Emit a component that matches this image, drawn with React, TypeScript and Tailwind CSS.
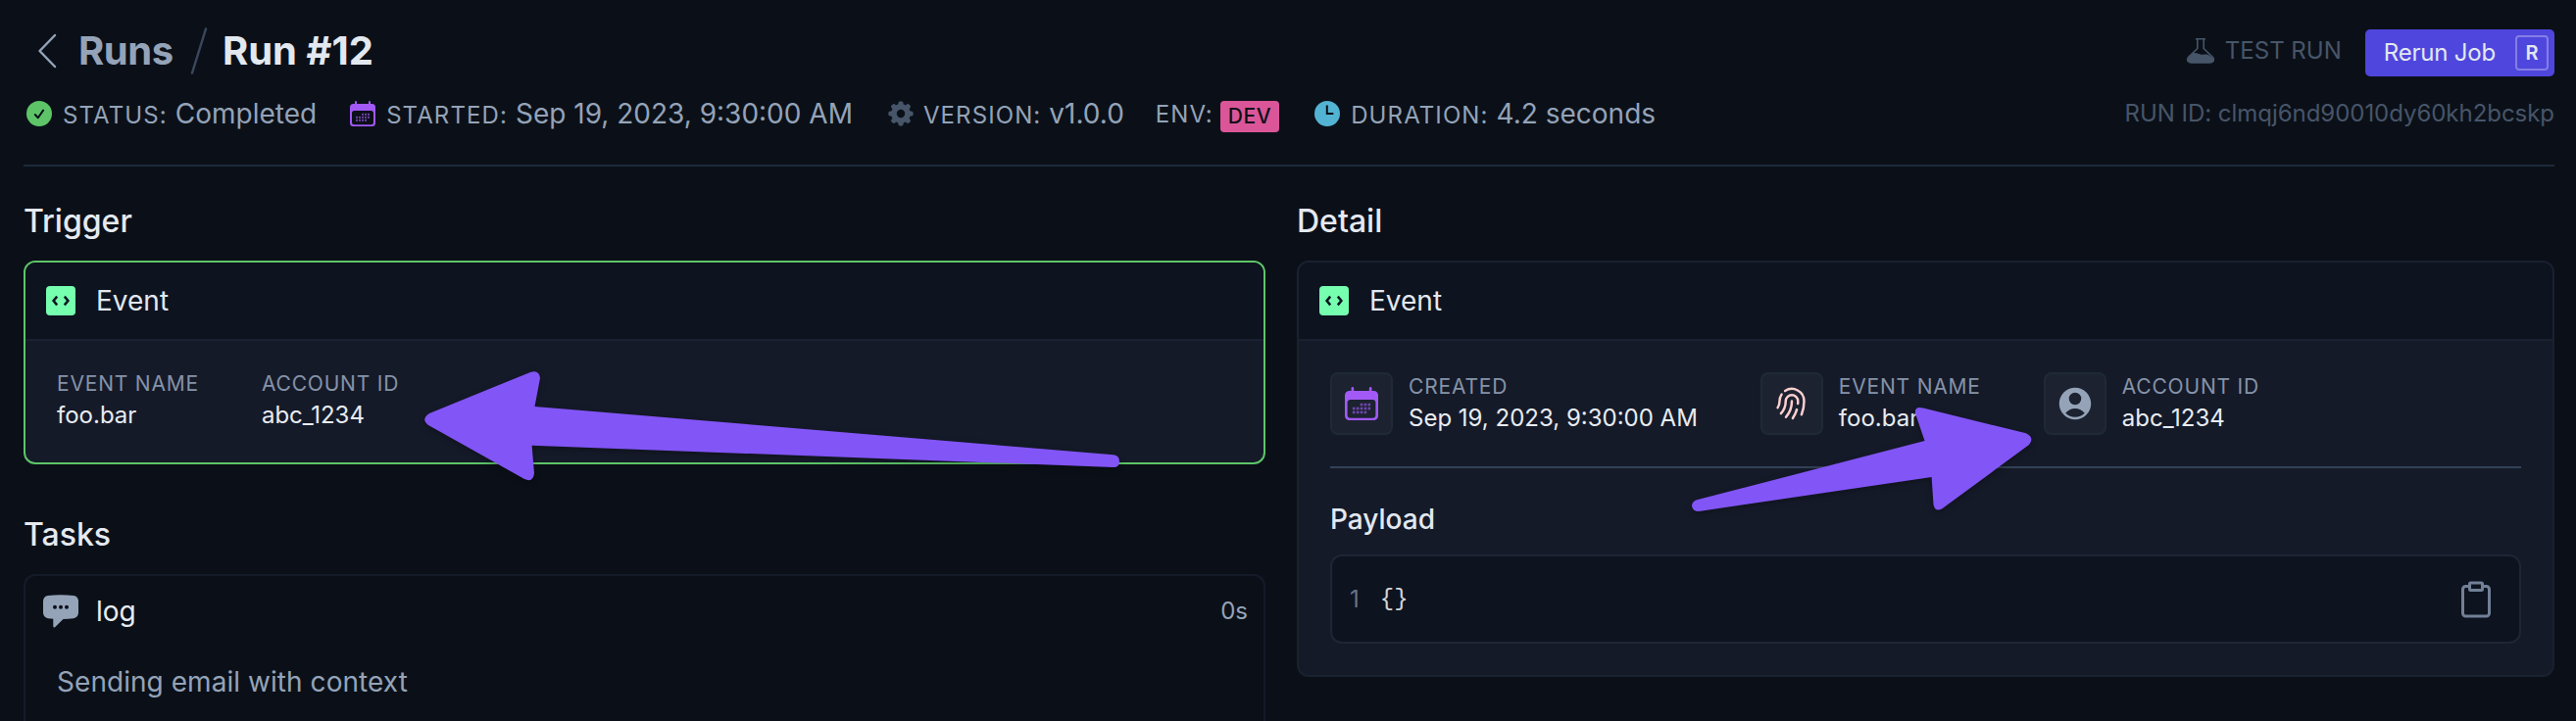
import type { ReactNode } from "react";
import { HiMiniCog8Tooth, HiOutlineFingerPrint, HiUserCircle } from "react-icons/hi2";

function CalendarIcon({ className }: { className: string }) {
  const dots = [
    [12, 12], [15, 12], [18, 12],
    [6, 15], [9, 15], [12, 15], [15, 15], [18, 15],
    [6, 18], [9, 18], [12, 18], [15, 18],
  ];
  return (
    <svg viewBox="0 0 26 26" className={className} fill="#a259f5">
      <path d="M5 1a1 1 0 0 1 2 0v2h12V1a1 1 0 0 1 2 0v2h1.500a3.500 3.500 0 0 1 3.500 3.500v16a3.500 3.500 0 0 1-3.500 3.500h-19A3.500 3.500 0 0 1 0 22.500v-16A3.500 3.500 0 0 1 3.500 3H5zM4.500 10A2.500 2.500 0 0 0 2 12.500v9.300A2.500 2.500 0 0 0 4.500 24.300h17a2.500 2.500 0 0 0 2.500-2.500v-9.300a2.500 2.500 0 0 0-2.500-2.500z" fillRule="evenodd" />
      {dots.map(([x, y]) => (
        <rect key={`${x}-${y}`} x={x} y={y + 0.8} width="2" height="2" opacity="0.65" />
      ))}
    </svg>
  );
}

function CodeIcon() {
  return (
    <svg viewBox="0 0 30 30" className="size-[30px] shrink-0" fill="none">
      <rect width="30" height="30" rx="4" fill="#76ffaf" />
      <path d="M11.200 10.600 7.600 15l3.600 4.400M18.800 10.600l3.600 4.400-3.600 4.400" stroke="#0d131f" strokeWidth="2.500" />
    </svg>
  );
}

function Meta({ label, children }: { label: string; children: ReactNode }) {
  return (
    <span className="flex items-baseline whitespace-nowrap pt-[2px] text-[28px] leading-[28px] text-[#94a3b8]">
      <span className="mr-2 text-2xl leading-[28px] tracking-[1.1px]">{label}</span>
      {children}
    </span>
  );
}

function Property({ label, value }: { label: string; value: string }) {
  return (
    <div className="flex flex-col whitespace-nowrap">
      <span className="text-[21px] leading-[30px] tracking-[0.8px] text-[#8593a8]">{label}</span>
      <span className="text-2xl leading-[34px] text-[#e8ecf1]">{value}</span>
    </div>
  );
}

function IconBox({ children }: { children: ReactNode }) {
  return (
    <div className="mr-4 flex size-16 shrink-0 items-center justify-center rounded-lg border-2 border-[#1f2937] bg-[#1c2230]">
      {children}
    </div>
  );
}

function CardHeader() {
  return (
    <div className="flex h-20 items-center gap-[21px] rounded-t-[10px] border-b-2 border-[#1a2130] bg-[#0d131f] pl-[21px] text-[28px] text-[#e2e8f0]">
      <CodeIcon />
      Event
    </div>
  );
}

function SectionTitle({ children }: { children: string }) {
  return <h2 className="mb-5 h-[41px] text-[32px] font-medium leading-[42px] text-[#e5e9f0]">{children}</h2>;
}

export default function App() {
  return (
    <div className="relative h-[736px] w-full overflow-hidden bg-[#0b1018] pl-6 pr-[22px] font-['Inter',sans-serif]">
      <header className="flex h-[170px] justify-between border-b-2 border-[#1e293b]">
        <div>
          <div className="flex h-[102px] items-center whitespace-nowrap text-[40px] font-bold">
            <svg viewBox="0 0 20 36" className="ml-[14px] mt-[2px] h-9 w-5" fill="none" stroke="#94a3b8" strokeWidth="2.500" strokeLinecap="round" strokeLinejoin="round">
              <path d="M18 2 2.500 18 18 34" />
            </svg>
            <span className="ml-[22px] pt-[2px] tracking-[-0.4px] text-[#94a3b8]">Runs</span>
            <svg viewBox="0 0 18 48" className="ml-[17px] mt-[2px] h-12 w-[18px]" fill="none" stroke="#3a475b" strokeWidth="2.500" strokeLinecap="round">
              <path d="M16 1.500 2 46.500" />
            </svg>
            <span className="ml-[15px] pt-[2px] text-[#e2e8f0]">Run #12</span>
          </div>
          <div className="flex h-7 items-center">
            <svg viewBox="0 0 26 26" className="ml-[3px] mr-[11px] size-[26px]" fill="none">
              <circle cx="13" cy="13" r="13" fill="#5dc568" />
              <path d="m8.800 14 3 3.200 5.300-7.600" stroke="#0b1018" strokeWidth="2" strokeLinecap="round" strokeLinejoin="round" />
            </svg>
            <Meta label="STATUS:">Completed</Meta>
            <CalendarIcon className="ml-[34px] mr-[11px] size-[26px]" />
            <Meta label="STARTED:">Sep 19, 2023, 9:30:00 AM</Meta>
            <HiMiniCog8Tooth className="ml-[35px] mr-[9px] size-7 text-[#475569]" />
            <Meta label="VERSION:">v1.0.0</Meta>
            <span className="ml-8 flex items-center">
              <Meta label="ENV:">{""}</Meta>
              <span className="-ml-px mt-[6px] flex h-8 items-center rounded bg-[#db5698] px-2 text-[21px] font-medium tracking-[0.6px] text-[#0b1018]">DEV</span>
            </span>
            <svg viewBox="0 0 26 26" className="ml-9 mr-[11px] size-[26px]" fill="none">
              <circle cx="13" cy="13" r="13" fill="#53b3d3" />
              <path d="M12.800 4.500V13h6.500" stroke="#0b1018" strokeWidth="2" />
            </svg>
            <Meta label="DURATION:">4.2 seconds</Meta>
          </div>
        </div>
        <div className="flex flex-col items-end text-2xl text-[#475569]">
          <div className="flex h-[102px] items-center">
            <svg viewBox="0 0 28 26" className="mr-[11px] mt-[2px] h-[26px] w-7" fill="none" stroke="#475569" strokeWidth="1.600">
              <path d="M9 .8h10M10.800 1v9.500L1.500 19.500C-.4 22.500 1 25 5 25h18c4 0 5.400-2.500 3.500-5.500L17.200 10.500V1" />
              <path d="M6 15.200c3-.9 5 .5 8 1.300 3 .6 5-.4 7.500.2l5 3.300c1.400 2.500 0 5-3.500 5H5c-3.500 0-5-2.500-3.300-5z" fill="#475569" stroke="none" />
            </svg>
            <span className="mr-6 pt-[2px]">TEST RUN</span>
            <button className="mt-[6px] flex h-12 items-center rounded-[5px] bg-[#4f46dd] pl-[19px] pr-[6px] text-2xl text-[#e2e8f0]">
              <span className="tracking-[-0.2px]">Rerun Job</span>
              <span className="ml-5 flex h-9 w-[34px] items-center justify-center rounded border-2 border-[#857ee6] text-[20px] font-semibold">R</span>
            </button>
          </div>
          <div className="h-7 leading-[28px] tracking-[-0.04px]">RUN ID: clmqj6nd90010dy60kh2bcskp</div>
        </div>
      </header>

      <main className="flex gap-8 pt-[35px]">
        <div className="w-[1267px] shrink-0">
          <SectionTitle>Trigger</SectionTitle>
          <section className="mb-[51px] h-[208px] rounded-xl border-2 border-[#5dc568] bg-[#151a29]">
            <CardHeader />
            <div className="flex gap-16 pl-8 pt-[29px]">
              <Property label="EVENT NAME" value="foo.bar" />
              <Property label="ACCOUNT ID" value="abc_1234" />
            </div>
          </section>
          <SectionTitle>Tasks</SectionTitle>
          <section className="h-[220px] rounded-xl border-2 border-[#151a29]">
            <div className="flex h-[72px] items-center pl-[18px] pr-[16px]">
              <svg viewBox="0 0 36 34" className="h-[34px] w-9" fill="#94a3b8">
                <path d="M5 .9C13 0 23 0 31 .9c3 .4 5 2.600 5 5.500v12.200c0 3-2 5.200-5 5.600-3.500.4-7 .6-10.500.7L12.300 32.900c-.9.900-2 .6-2-.6v-7.600L5 24.200c-3-.4-5-2.600-5-5.600V6.400C0 3.500 2 1.300 5 .9z" />
                <circle cx="12" cy="12.800" r="2" fill="#0b1018" />
                <circle cx="18" cy="12.800" r="2" fill="#0b1018" />
                <circle cx="24" cy="12.800" r="2" fill="#0b1018" />
              </svg>
              <span className="ml-[18px] text-[28px] text-[#e8ecf1]">log</span>
              <span className="ml-auto text-2xl text-[#94a3b8]">0s</span>
            </div>
            <p className="pl-8 pt-4 text-[28px] leading-10 tracking-[0.05px] text-[#94a3b8]">Sending email with context</p>
          </section>
        </div>

        <div className="flex-1">
          <SectionTitle>Detail</SectionTitle>
          <section className="h-[425px] rounded-xl border-2 border-[#1a2130] bg-[#151a29]">
            <CardHeader />
            <div className="px-8">
              <div className="flex h-[130px] items-start border-b-2 border-[#334155] pt-8">
                <IconBox><CalendarIcon className="size-[34px]" /></IconBox>
                <Property label="CREATED" value="Sep 19, 2023, 9:30:00 AM" />
                <div className="w-16 shrink-0" />
                <IconBox><HiOutlineFingerPrint className="size-10 text-[#fbcfcf]" /></IconBox>
                <Property label="EVENT NAME" value="foo.bar" />
                <div className="w-16 shrink-0" />
                <IconBox><HiUserCircle className="size-10 text-[#94a3b8]" /></IconBox>
                <Property label="ACCOUNT ID" value="abc_1234" />
              </div>
              <h3 className="mb-4 mt-8 text-[28px] font-medium leading-10 text-[#e2e8f0]">Payload</h3>
              <div className="flex h-[91px] items-center rounded-xl border-2 border-[#1e2635] bg-[#0d131f] pl-[18px] pr-[29px] text-2xl">
                <span className="text-[#64748b]">1</span>
                <span className="ml-[21px] font-['Liberation_Mono',monospace] text-[#d4d4d4]">{"{}"}</span>
                <svg viewBox="0 0 30 38" className="ml-auto h-[38px] w-[30px]" fill="none" stroke="#718096" strokeWidth="3">
                  <path d="M7.500 5.500h-3a3 3 0 0 0-3 3V33a3 3 0 0 0 3 3h21a3 3 0 0 0 3-3V8.500a3 3 0 0 0-3-3h-3" />
                  <rect x="8.500" y="2" width="13" height="7.500" rx="1" />
                </svg>
              </div>
            </div>
          </section>
        </div>
      </main>

      <svg viewBox="0 0 2628 736" className="pointer-events-none absolute left-0 top-0 h-[736px] w-[2628px] drop-shadow-[0_2px_3px_rgba(0,0,0,0.3)]" fill="#8255f7">
        <path d="M438 422 541 380Q550 377 551 386L545.500 415 1136 464.300Q1142 465 1142 471 1142 477 1136 477L542.600 454.700 545 483Q544 493 535 489L437 434Q429 428 438 422z" />
        <path d="M1731 510.300 1963.500 450 1954 422Q1953 414 1962 416.500L2067 442.300Q2076 447 2070 454L1981 519.500Q1974 523 1972.500 515L1970.600 487 1733 522Q1727 522 1726 516.500 1726 512 1731 510.300z" />
      </svg>
    </div>
  );
}
